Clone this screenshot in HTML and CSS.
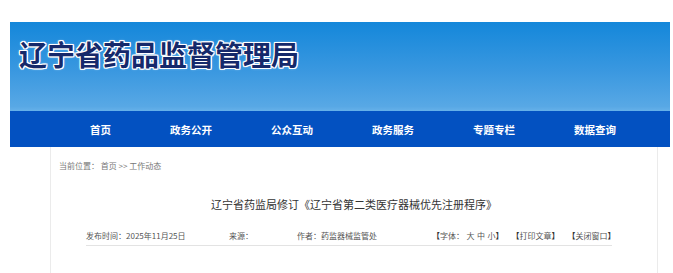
FILE: index.html
```html
<!DOCTYPE html>
<html lang="zh-CN">

<head>
    <meta charset="UTF-8">
    <meta name="viewport" content="width=device-width, initial-scale=1.0">
    <title>辽宁省药品监督管理局</title>
    <link rel="stylesheet" href="styles.css">
</head>

<body>
    <div class="page">
        <!-- 头部 -->
        <div class="banner">
            <div class="site-name">辽宁省药品监督管理局</div>
        </div>

        <!-- 导航 -->
        <div class="nav">
            <a href="#">首页</a>
            <a href="#">政务公开</a>
            <a href="#">公众互动</a>
            <a href="#">政务服务</a>
            <a href="#">专题专栏</a>
            <a href="#">数据查询</a>
        </div>

        <!-- 正文 -->
        <div class="panel">
            <div class="crumb">当前位置： <a href="#">首页</a> &gt;&gt; <a href="#">工作动态</a></div>
            <h1 class="article-title">辽宁省药监局修订《辽宁省第二类医疗器械优先注册程序》</h1>
            <div class="meta">
                <span class="meta-date">发布时间：2025年11月25日</span>
                <span class="meta-source">来源：</span>
                <span class="meta-author">作者：药监器械监管处</span>
                <span class="meta-tools">
                    <span class="tool"><b>【</b>字体：<a class="size" href="#">大</a><a class="size" href="#">中</a><a class="size" href="#">小</a><b class="end">】</b></span>
                    <span class="tool"><b>【</b>打印文章<b>】</b></span>
                    <span class="tool"><b>【</b>关闭窗口<b>】</b></span>
                </span>
            </div>
        </div>
    </div>
</body>

</html>
```

FILE: styles.css
```css
body {
    margin: 0;
    padding: 0;
    font-family: "Noto Sans CJK SC", "Noto Sans", sans-serif;
    background: #fff;
}

a {
    color: inherit;
    text-decoration: none;
}

.page {
    width: 660px;
    margin: 22px 0 0 10px;
}

/* 头部 */
.banner {
    height: 89px;
    box-sizing: border-box;
    padding: 14px 0 0 9px;
    background: linear-gradient(#1487da, #3a98e0 55%, #58a8e5 95%, #66b1e9);
}

.site-name {
    font-size: 28px;
    line-height: 36px;
    font-weight: bold;
    color: #15296b;
    text-shadow:
        1px 0 0 #fff, -1px 0 0 #fff, 0 1px 0 #fff, 0 -1px 0 #fff,
        1px 1px 0 #fff, -1px -1px 0 #fff, 1px -1px 0 #fff, -1px 1px 0 #fff,
        0 0 3px #e8f2ff;
}

/* 导航 */
.nav {
    height: 36px;
    display: flex;
    align-items: center;
    gap: 59px;
    padding-left: 80px;
    background-color: #0351c1;
}

.nav a {
    color: #fff;
    font-size: 10.5px;
    font-weight: bold;
}

/* 正文 */
.panel {
    width: 608px;
    height: 130px;
    box-sizing: border-box;
    margin-left: 40px;
    padding: 13px 8px 0;
    border-left: 1px solid #ebebeb;
    border-right: 1px solid #ebebeb;
}

.crumb {
    font-size: 8px;
    line-height: 12px;
    color: #777;
}

.article-title {
    margin: 24px 0 0;
    text-align: center;
    font-size: 11px;
    line-height: 16px;
    font-weight: normal;
    color: #333;
}

.meta {
    display: flex;
    align-items: center;
    width: 526px;
    margin: 18px 0 0 27px;
    padding-bottom: 3px;
    border-bottom: 1px solid #e3e3e3;
    font-size: 8px;
    line-height: 12px;
    color: #555;
    white-space: nowrap;
}

.meta > span {
    flex: none;
}

.meta-date {
    width: 143px;
}

.meta-source {
    width: 68px;
}

.meta-author {
    width: 135px;
}

.meta-tools {
    display: flex;
    gap: 8px;
}

.meta-tools b {
    color: #333;
}

.size {
    margin-left: 2.5px;
}
```
